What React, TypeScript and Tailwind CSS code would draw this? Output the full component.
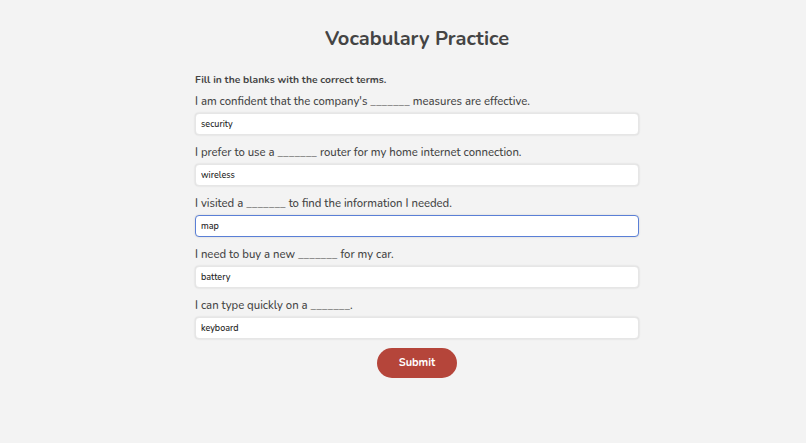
import { useState } from "react";

const questions = [
  { text: "I am confident that the company's _______ measures are effective.", answer: "security" },
  { text: "I prefer to use a _______ router for my home internet connection.", answer: "wireless" },
  { text: "I visited a _______ to find the information I needed.", answer: "map" },
  { text: "I need to buy a new _______ for my car.", answer: "battery" },
  { text: "I can type quickly on a _______.", answer: "keyboard" },
];

export default function App() {
  const [answers, setAnswers] = useState<string[]>(questions.map((q) => q.answer));

  return (
    <div
      className="min-h-screen bg-[#f3f3f3] text-[#444] pt-[24px] pl-[28px]"
      style={{ fontFamily: "Nunito, 'Noto Sans', sans-serif" }}
    >
      <div className="w-[444px] mx-auto">
        <h1 className="text-center text-[20px] font-bold leading-[30px] mb-[18px]">Vocabulary Practice</h1>
        <p className="text-[10.3px] font-bold leading-[16px] mb-[5px]">Fill in the blanks with the correct terms.</p>

        {questions.map((q, i) => (
          <div key={i} className="mb-[9px]">
            <label className="block text-[11.3px] font-medium leading-[18px] mb-[2px]">{q.text}</label>
            <input
              value={answers[i]}
              onChange={(e) => {
                const next = [...answers];
                next[i] = e.target.value;
                setAnswers(next);
              }}
              className={
                "block w-full h-[22px] px-[5px] bg-white rounded-[4px] text-[9px] font-medium text-[#222] outline-none shadow-[0_0_2px_rgba(0,0,0,0.15)] " +
                (i === 2 ? "border border-[#5a7fd6]" : "border border-[#e6e6e6]")
              }
            />
          </div>
        ))}

        <div className="flex justify-center mt-[2px]">
          <button className="w-[80px] h-[30px] rounded-full bg-[#b5453a] text-white text-[11px] font-bold">
            Submit
          </button>
        </div>
      </div>
    </div>
  );
}
